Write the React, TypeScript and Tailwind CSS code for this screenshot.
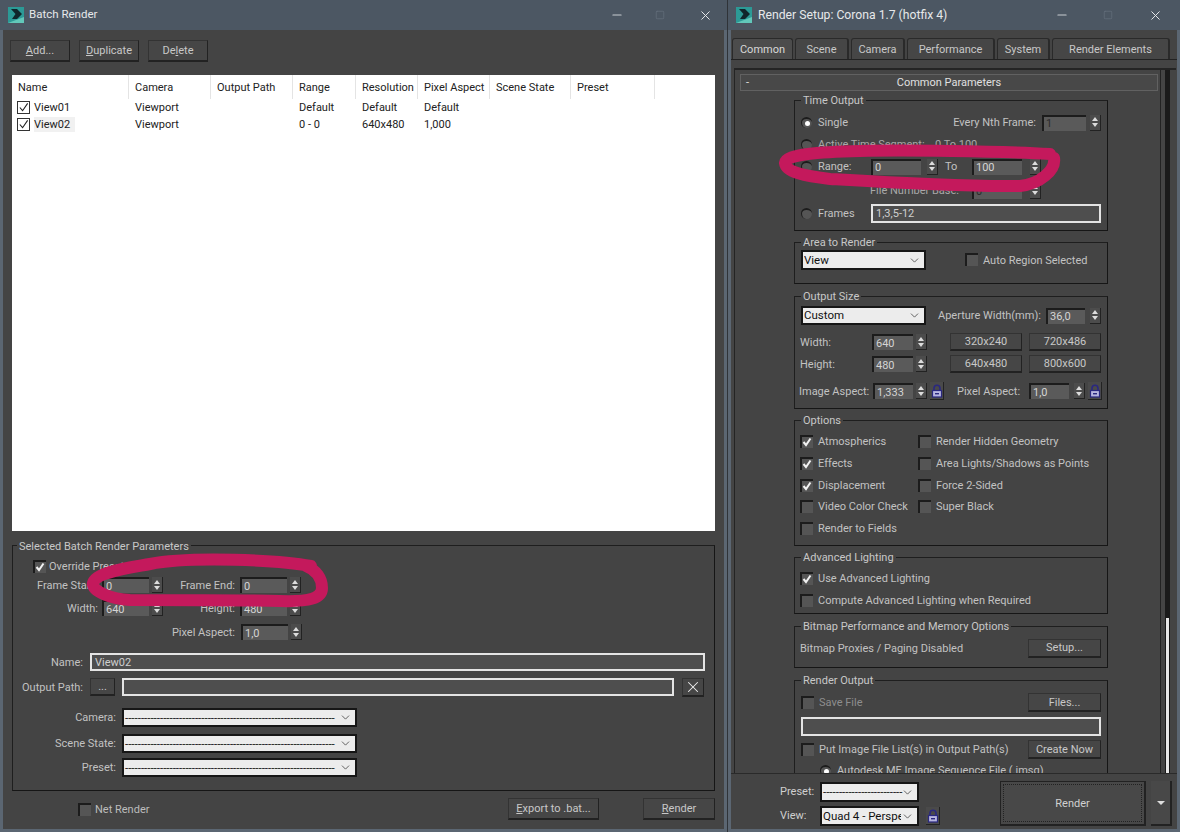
import type { ReactNode } from "react"
import { ChevronDown, Minus, Square, X } from "lucide-react"

const columns = [
  { name: "Name", w: 111 },
  { name: "Camera", w: 82 },
  { name: "Output Path", w: 82 },
  { name: "Range", w: 63 },
  { name: "Resolution", w: 62 },
  { name: "Pixel Aspect", w: 72 },
  { name: "Scene State", w: 81 },
  { name: "Preset", w: 84 },
]

const rows = [
  ["View01", "Viewport", "", "Default", "Default", "Default"],
  ["View02", "Viewport", "", "0 - 0", "640x480", "1,000"],
]

function Logo() {
  return (
    <svg width="16" height="16" viewBox="0 0 16 16" className="shrink-0">
      <rect width="16" height="16" fill="#2c9a96" />
      <path d="M0 16 L16 16 L16 10 L8 13 Z" fill="#62c8ba" />
      <path d="M3 2 L9 2 L14 7 L9 12 L4 12 L7.5 7 Z" fill="#10262b" />
    </svg>
  )
}

function TitleBar({ title, right }: { title: string; right?: boolean }) {
  return (
    <div className={`flex h-[30px] shrink-0 items-center bg-[#4c5763] pl-[8px] text-[#e6e8ea] ${right ? "text-[12.2px]" : "text-[11.5px]"}`}>
      <Logo />
      <span className={right ? "ml-[6px]" : "ml-[5px]"}>{title}</span>
      <div className="ml-auto flex items-center">
        <Minus className={right ? "mr-[34px] h-[14px] w-[14px] text-[#c8cdd2]" : "mr-[31px] h-[14px] w-[14px] text-[#c8cdd2]"} />
        <Square className={right ? "mr-[35px] h-[10px] w-[10px] text-[#687380]" : "mr-[33px] h-[10px] w-[10px] text-[#687380]"} strokeWidth={1.5} />
        <X className={right ? "mr-[17px] h-[15px] w-[15px] text-[#e4e6e8]" : "mr-[14px] h-[15px] w-[15px] text-[#e4e6e8]"} strokeWidth={1.6} />
      </div>
    </div>
  )
}

function Btn({ children, className = "" }: { children: ReactNode; className?: string }) {
  return (
    <div className={`flex shrink-0 items-center justify-center border border-[#333] border-r-[#222] border-b-2 border-b-[#222] bg-[#464646] text-[#c8c8c8] ${className}`}>
      {children}
    </div>
  )
}

function Spin({ className = "" }: { className?: string }) {
  return (
    <div className={`flex w-[11px] shrink-0 flex-col items-center justify-center gap-[2px] border-r border-b border-[#222] bg-[#4c4c4c] ${className}`}>
      <div className="h-0 w-0 border-x-[3px] border-b-[4px] border-x-transparent border-b-[#ddd]" />
      <div className="h-0 w-0 border-x-[3px] border-t-[4px] border-x-transparent border-t-[#ddd]" />
    </div>
  )
}

function Spinner({ value, w, gap = 3, dim }: { value: string; w: number; gap?: number; dim?: boolean }) {
  return (
    <div className="flex h-[16px] shrink-0 items-stretch">
      <div
        className={`flex items-center border-t-2 border-l-2 border-[#1c1c1c] bg-[#5a5a5a] pl-[2px] ${dim ? "text-[#2c2c2c]" : "text-[#d4d4d4]"}`}
        style={{ width: w }}
      >
        {value}
      </div>
      <div style={{ width: gap }} />
      <Spin />
    </div>
  )
}

function TextField({ value, className = "" }: { value?: string; className?: string }) {
  return (
    <div className={`flex items-center border-2 border-[#e4e4e4] bg-[#4e4e4e] pl-[3px] text-[#cfcfcf] ${className}`}>
      {value}
    </div>
  )
}

function Select({ value, dashes, className = "" }: { value?: string; dashes?: number; className?: string }) {
  return (
    <div className={`flex shrink-0 items-center border-2 border-[#161616] bg-[#ececec] pr-[3px] pl-[1px] text-[11.5px] text-[#111] ${className}`}>
      {dashes ? (
        <span className="min-w-0 flex-1 leading-[14px] whitespace-nowrap">{"-".repeat(dashes)}</span>
      ) : (
        <span className="min-w-0 flex-1 overflow-hidden leading-[15px] whitespace-nowrap">{value}</span>
      )}
      <ChevronDown className="h-[13px] w-[13px] shrink-0 text-[#444]" strokeWidth={1.5} />
    </div>
  )
}

function Check({ on, className = "" }: { on?: boolean; className?: string }) {
  return (
    <div className={`relative h-[13px] w-[13px] shrink-0 border-t-2 border-l-2 border-[#1c1c1c] bg-[#555] ${className}`}>
      {on && (
        <svg viewBox="0 0 12 12" className="absolute top-[-1px] left-[-1px] h-[12px] w-[12px]">
          <path d="M2.5 6 L5 9 L9.5 2.5" fill="none" stroke="#f2f2f2" strokeWidth="2" />
        </svg>
      )}
    </div>
  )
}

function Radio({ on }: { on?: boolean }) {
  return (
    <div className="flex h-[11px] w-[11px] shrink-0 items-center justify-center rounded-full border-t-2 border-l border-[#1c1c1c] bg-[#555]">
      {on && <div className="h-[5px] w-[5px] rounded-full bg-white" />}
    </div>
  )
}

function Lock() {
  return (
    <div className="flex h-[18px] w-[14px] shrink-0 items-center justify-center border-r border-b border-[#222] bg-[#4a4a4a]">
      <svg width="12" height="14" viewBox="0 0 12 14">
        <path d="M3 7 V4.2 a3 3 0 0 1 6 0 V7" fill="none" stroke="#2a2880" strokeWidth="1.6" />
        <rect x="1.5" y="6.5" width="9" height="6.5" fill="#b7b5e0" stroke="#2a2880" strokeWidth="1.2" />
        <rect x="4" y="9" width="4" height="1.4" fill="#2a2880" />
      </svg>
    </div>
  )
}

function Group({ title, className = "", labelClass = "left-[6px] top-[-7px]", children }: { title: string; className?: string; labelClass?: string; children: ReactNode }) {
  return (
    <div className={`relative border border-[#1e1e1e] border-r-[#161616] border-b-[#161616] ${className}`}>
      <span className={`absolute bg-[#444] px-[2px] leading-[14px] whitespace-nowrap text-[#c8c8c8] ${labelClass}`}>
        {title}
      </span>
      {children}
    </div>
  )
}

function Underlined({ first, rest }: { first: string; rest: string }) {
  return (
    <span>
      <span className="underline">{first}</span>
      {rest}
    </span>
  )
}

function BatchRender() {
  return (
    <div className="flex h-[832px] w-[727px] shrink-0 flex-col bg-[#5b6672]">
      <TitleBar title="Batch Render" />
      <div className="mx-[3px] mb-[3px] flex flex-1 flex-col bg-[#444] pt-[10px]">
        <div className="ml-[7px] flex h-[22px] gap-[9px]">
          <Btn className="w-[60px]"><Underlined first="A" rest="dd..." /></Btn>
          <Btn className="w-[60px]"><Underlined first="D" rest="uplicate" /></Btn>
          <Btn className="w-[60px]">De<span className="underline">l</span>ete</Btn>
        </div>

        <div className="mt-[13px] ml-[9px] h-[456px] w-[703px] bg-white pl-[6px] text-[#222]">
          <div className="flex h-[24px]">
            {columns.map((c) => (
              <div key={c.name} className="flex items-center border-r border-[#e4e4e4]" style={{ width: c.w }}>
                <span className={c.name === "Name" ? "" : "pl-[6px]"}>{c.name}</span>
              </div>
            ))}
          </div>
          {rows.map((r, i) => (
            <div key={r[0]} className="flex h-[17px] items-center">
              {r.map((cell, j) => (
                <div key={j} className="flex items-center whitespace-nowrap" style={{ width: columns[j].w }}>
                  {j === 0 ? (
                    <>
                      <div className="mr-[4px] -ml-[1px] flex h-[13px] w-[13px] items-center justify-center border border-[#333]">
                        <svg viewBox="0 0 12 12" className="h-[11px] w-[11px]">
                          <path d="M2 6 L5 9.5 L10.5 1.5" fill="none" stroke="#222" strokeWidth="1.2" />
                        </svg>
                      </div>
                      <span className={i === 1 ? "bg-[#f1f1f1] py-[2px] pr-[5px]" : ""}>{cell}</span>
                    </>
                  ) : (
                    <span className="pl-[6px]">{cell}</span>
                  )}
                </div>
              ))}
            </div>
          ))}
        </div>

        <Group title="Selected Batch Render Parameters" labelClass="left-[4px] top-[-6px]" className="mt-[14px] ml-[9px] h-[246px] w-[703px]">
          <div className="mt-[12px] ml-[20px] flex h-[16px] items-center">
            <Check on />
            <span className="ml-[3px]">Override Preset</span>
          </div>
          <div className="mt-[3px] flex h-[16px] items-center">
            <span className="w-[84px] text-right whitespace-nowrap">Frame Start:</span>
            <div className="w-[5px]" />
            <Spinner value="0" w={47} />
            <span className="w-[72px] text-right whitespace-nowrap">Frame End:</span>
            <div className="w-[5px]" />
            <Spinner value="0" w={47} />
          </div>
          <div className="mt-[7px] flex h-[16px] items-center">
            <span className="w-[85px] text-right">Width:</span>
            <div className="w-[4px]" />
            <Spinner value="640" w={47} />
            <span className="w-[72px] text-right">Height:</span>
            <div className="w-[5px]" />
            <Spinner value="480" w={47} />
          </div>
          <div className="mt-[8px] flex h-[16px] items-center">
            <span className="w-[222px] text-right">Pixel Aspect:</span>
            <div className="w-[6px]" />
            <Spinner value="1,0" w={47} />
          </div>
          <div className="mt-[13px] flex h-[18px] items-center">
            <span className="w-[70px] text-right">Name:</span>
            <TextField value="View02" className="ml-[7px] h-[18px] w-[615px]" />
          </div>
          <div className="mt-[7px] flex h-[18px] items-center">
            <span className="w-[70px] text-right whitespace-nowrap">Output Path:</span>
            <Btn className="ml-[7px] h-[18px] w-[25px]">...</Btn>
            <TextField className="ml-[7px] h-[18px] w-[552px]" />
            <Btn className="ml-[8px] h-[19px] w-[22px]">
              <X className="h-[18px] w-[18px] text-[#eee]" strokeWidth={1.4} />
            </Btn>
          </div>
          {[
            { label: "Camera:", mt: "mt-[12px]" },
            { label: "Scene State:", mt: "mt-[7px]" },
            { label: "Preset:", mt: "mt-[5px]" },
          ].map((s) => (
            <div key={s.label} className={`${s.mt} flex h-[19px] items-center`}>
              <span className="w-[103px] text-right">{s.label}</span>
              <Select dashes={66} className="ml-[6px] h-[19px] w-[235px]" />
            </div>
          ))}
        </Group>

        <div className="mt-[7px] ml-[9px] flex h-[22px] w-[703px] items-center">
          <Check className="ml-[66px]" />
          <span className="ml-[4px] whitespace-nowrap text-[#bcbcbc]">Net Render</span>
          <Btn className="mr-[44px] ml-auto h-[22px] w-[91px]"><Underlined first="E" rest="xport to .bat..." /></Btn>
          <Btn className="h-[22px] w-[72px]"><Underlined first="R" rest="ender" /></Btn>
        </div>
      </div>
    </div>
  )
}

function OptionRow({ on, label, right, rightLabel }: { on?: boolean; label: string; right?: boolean; rightLabel?: string }) {
  return (
    <div className="flex h-[21.7px] items-center pl-[5px]">
      <Check on={on} />
      <span className="ml-[5px] w-[100px] whitespace-nowrap">{label}</span>
      {right && <Check />}
      {right && <span className="ml-[5px] whitespace-nowrap">{rightLabel}</span>}
    </div>
  )
}

const tabs = [
  { name: "Common", w: 61 },
  { name: "Scene", w: 54 },
  { name: "Camera", w: 54 },
  { name: "Performance", w: 88 },
  { name: "System", w: 53 },
  { name: "Render Elements", w: 118 },
]

function RenderSetup() {
  return (
    <div className="flex h-[832px] flex-1 flex-col bg-[#5b6672]">
      <TitleBar title="Render Setup: Corona 1.7 (hotfix 4)" right />
      <div className="mr-[3px] ml-[3px] mb-[3px] flex min-h-0 flex-1 flex-col bg-[#444]">
        <div className="mt-[8px] flex h-[22px] shrink-0 gap-[2px] border-b border-[#222] pl-[1px]">
          {tabs.map((t, i) => (
            <div
              key={t.name}
              className={
                i === 0
                  ? "flex items-center justify-center rounded-t-[3px] border-t border-r border-l border-[#2a2a2a] bg-[#4c4c4c] text-[#d8d8d8]"
                  : "flex items-center justify-center rounded-t-[3px] border-t border-r-2 border-l border-[#2a2a2a] bg-[#464646] text-[#c8c8c8]"
              }
              style={{ width: t.w }}
            >
              {t.name}
            </div>
          ))}
        </div>

        <div className="mt-[8px] ml-[3px] flex h-[705px] w-[442px] shrink-0 flex-col overflow-hidden border-t-2 border-l border-[#242424]">
          <div className="relative flex min-h-0 flex-1">
            <div className="ml-[5px] w-[420px] min-w-0">
              <div className="mt-[4px] flex h-[17px] w-[418px] items-center border border-[#616161] bg-[#484848] text-[#e0e0e0]">
                <span className="ml-[5px] w-[10px]">-</span>
                <span className="flex-1 pr-[15px] text-center">Common Parameters</span>
              </div>

              <Group title="Time Output" className="mt-[9px] ml-[54px] h-[131px] w-[314px]">
                <div className="mt-[13px] flex h-[17px] items-center pl-[6px]">
                  <Radio on />
                  <span className="ml-[6px]">Single</span>
                  <span className="ml-auto whitespace-nowrap">Every Nth Frame:</span>
                  <div className="mr-[6px] ml-[6px]"><Spinner value="1" w={44} gap={4} dim /></div>
                </div>
                <div className="mt-[5px] flex h-[17px] items-center pl-[6px] text-[#a9a9a9]">
                  <Radio />
                  <span className="ml-[6px] w-[117px] whitespace-nowrap">Active Time Segment:</span>
                  <span>0 To 100</span>
                </div>
                <div className="mt-[5px] flex h-[17px] items-center pl-[6px]">
                  <Radio />
                  <span className="ml-[6px] w-[53px]">Range:</span>
                  <Spinner value="0" w={50} gap={6} />
                  <span className="ml-[7px] w-[27px]">To</span>
                  <Spinner value="100" w={50} gap={8} />
                </div>
                <div className="mt-[7px] flex h-[17px] items-center">
                  <span className="ml-[75px] w-[102px] whitespace-nowrap text-[#a9a9a9]">File Number Base:</span>
                  <Spinner value="0" w={50} gap={8} dim />
                </div>
                <div className="mt-[5px] flex h-[19px] items-center pl-[6px]">
                  <Radio />
                  <span className="ml-[6px] w-[53px]">Frames</span>
                  <TextField value="1,3,5-12" className="h-[19px] w-[230px]" />
                </div>
              </Group>

              <Group title="Area to Render" className="mt-[11px] ml-[54px] h-[42px] w-[314px]">
                <div className="mt-[7px] flex items-start pl-[6px]">
                  <Select value="View" className="h-[20px] w-[125px]" />
                  <Check className="mt-[3px] ml-[39px]" />
                  <span className="mt-[5px] ml-[5px] whitespace-nowrap">Auto Region Selected</span>
                </div>
              </Group>

              <Group title="Output Size" className="mt-[12px] ml-[54px] h-[113px] w-[314px]">
                <div className="mt-[9px] flex h-[19px] items-center pl-[6px]">
                  <Select value="Custom" className="h-[19px] w-[125px]" />
                  <span className="ml-[12px] whitespace-nowrap">Aperture Width(mm):</span>
                  <div className="mr-[6px] ml-auto"><Spinner value="36,0" w={39} gap={5} /></div>
                </div>
                <div className="mt-[8px] flex h-[18px] items-center pl-[5px]">
                  <span className="w-[72px]">Width:</span>
                  <Spinner value="640" w={41} />
                  <Btn className="ml-[23px] h-[18px] w-[72px]">320x240</Btn>
                  <Btn className="ml-[7px] h-[18px] w-[72px]">720x486</Btn>
                </div>
                <div className="mt-[4px] flex h-[18px] items-center pl-[5px]">
                  <span className="w-[72px]">Height:</span>
                  <Spinner value="480" w={41} />
                  <Btn className="ml-[23px] h-[18px] w-[72px]">640x480</Btn>
                  <Btn className="ml-[7px] h-[18px] w-[72px]">800x600</Btn>
                </div>
                <div className="mt-[9px] flex h-[18px] items-center pl-[4px]">
                  <span className="w-[74px] whitespace-nowrap">Image Aspect:</span>
                  <Spinner value="1,333" w={40} />
                  <div className="ml-[3px]"><Lock /></div>
                  <span className="ml-[13px] w-[72px] whitespace-nowrap">Pixel Aspect:</span>
                  <Spinner value="1,0" w={40} gap={5} />
                  <div className="ml-[3px]"><Lock /></div>
                </div>
              </Group>

              <Group title="Options" className="mt-[11px] ml-[54px] h-[126px] w-[314px]">
                <div className="mt-[10px]">
                  <OptionRow on label="Atmospherics" right rightLabel="Render Hidden Geometry" />
                  <OptionRow on label="Effects" right rightLabel="Area Lights/Shadows as Points" />
                  <OptionRow on label="Displacement" right rightLabel="Force 2-Sided" />
                  <OptionRow label="Video Color Check" right rightLabel="Super Black" />
                  <OptionRow label="Render to Fields" />
                </div>
              </Group>

              <Group title="Advanced Lighting" className="mt-[11px] ml-[54px] h-[57px] w-[314px]">
                <div className="mt-[10px]">
                  <OptionRow on label="Use Advanced Lighting" />
                  <OptionRow label="Compute Advanced Lighting when Required" />
                </div>
              </Group>

              <Group title="Bitmap Performance and Memory Options" className="mt-[12px] ml-[54px] h-[42px] w-[314px]">
                <div className="mt-[12px] flex h-[18px] items-center pl-[5px]">
                  <span className="whitespace-nowrap">Bitmap Proxies / Paging Disabled</span>
                  <Btn className="mr-[6px] ml-auto h-[19px] w-[73px]">Setup...</Btn>
                </div>
              </Group>

              <Group title="Render Output" className="mt-[12px] ml-[54px] h-[120px] w-[314px]">
                <div className="mt-[12px] flex h-[19px] items-center pl-[6px]">
                  <Check />
                  <span className="ml-[5px] text-[#8e8e8e]">Save File</span>
                  <Btn className="mr-[6px] ml-auto h-[19px] w-[73px]">Files...</Btn>
                </div>
                <TextField className="mt-[5px] ml-[6px] h-[19px] w-[300px]" />
                <div className="mt-[4px] flex h-[19px] items-center pl-[6px]">
                  <Check />
                  <span className="ml-[5px] whitespace-nowrap">Put Image File List(s) in Output Path(s)</span>
                  <Btn className="mr-[6px] ml-auto h-[19px] w-[73px]">Create Now</Btn>
                </div>
                <div className="mt-[3px] flex h-[16px] items-center pl-[25px]">
                  <Radio on />
                  <span className="ml-[6px] whitespace-nowrap">Autodesk ME Image Sequence File (.imsq)</span>
                </div>
              </Group>
            </div>

            <div className="w-[1px] bg-[#222]" />
            <div className="ml-[4px] flex w-[5px] flex-col bg-[#1a1a1a]">
              <div className="mx-[1px] mt-[548px] flex-1 bg-[#e8e8e8]" />
            </div>
          </div>
        </div>

        <div className="flex min-h-0 flex-1 items-start border-t border-[#2a2a2a]">
          <div className="mt-[8px] ml-[49px] w-[40px] text-[#cfcfcf]">
            <div className="flex h-[19px] items-center">Preset:</div>
            <div className="mt-[5px] flex h-[19px] items-center">View:</div>
          </div>
          <div className="mt-[8px]">
            <Select dashes={25} className="h-[20px] w-[99px]" />
            <div className="mt-[4px] flex items-center">
              <Select value="Quad 4 - Perspective" className="h-[20px] w-[99px]" />
              <div className="ml-[7px]"><Lock /></div>
            </div>
          </div>
          <div className="mt-[7px] ml-[60px] flex h-[45px] w-[146px] items-center justify-center border border-r-2 border-b-2 border-[#222] bg-[#484848] p-[2px] text-[#d0d0d0]">
            <div className="flex h-full w-full items-center justify-center border border-dotted border-[#222]">Render</div>
          </div>
          <div className="mt-[7px] ml-[5px] flex h-[45px] w-[21px] items-center justify-center border-r-2 border-b-2 border-[#222] bg-[#484848]">
            <div className="h-0 w-0 border-x-[4px] border-t-[4px] border-x-transparent border-t-[#ddd]" />
          </div>
        </div>
      </div>
    </div>
  )
}

export default function App() {
  return (
    <div className="relative flex h-[832px] w-[1180px] overflow-hidden bg-[#5b6672] font-['Roboto',sans-serif] text-[11px] leading-none text-[#c2c2c2]">
      <BatchRender />
      <div className="w-[1px] shrink-0 bg-[#2f3338]" />
      <RenderSetup />
      {/* pink marker scribbles over both windows */}
      <svg className="pointer-events-none absolute inset-0" width="1180" height="832" fill="none" stroke="#c4195c" strokeWidth="12" strokeLinecap="round">
        <path d="M311 566 C 280 560, 190 556, 150 564 C 128 568, 96 572, 93 583 C 92 592, 112 599, 130 600 C 170 600, 240 600, 280 601 C 310 602, 322 598, 322 588 C 322 578, 316 570, 306 566" />
        <path d="M1050 154 C 1000 151, 900 150, 860 151 C 820 152, 786 154, 785 163 C 786 172, 805 176, 830 179 C 880 182, 960 187, 1020 186 C 1040 184, 1056 170, 1054 158" />
      </svg>
    </div>
  )
}
